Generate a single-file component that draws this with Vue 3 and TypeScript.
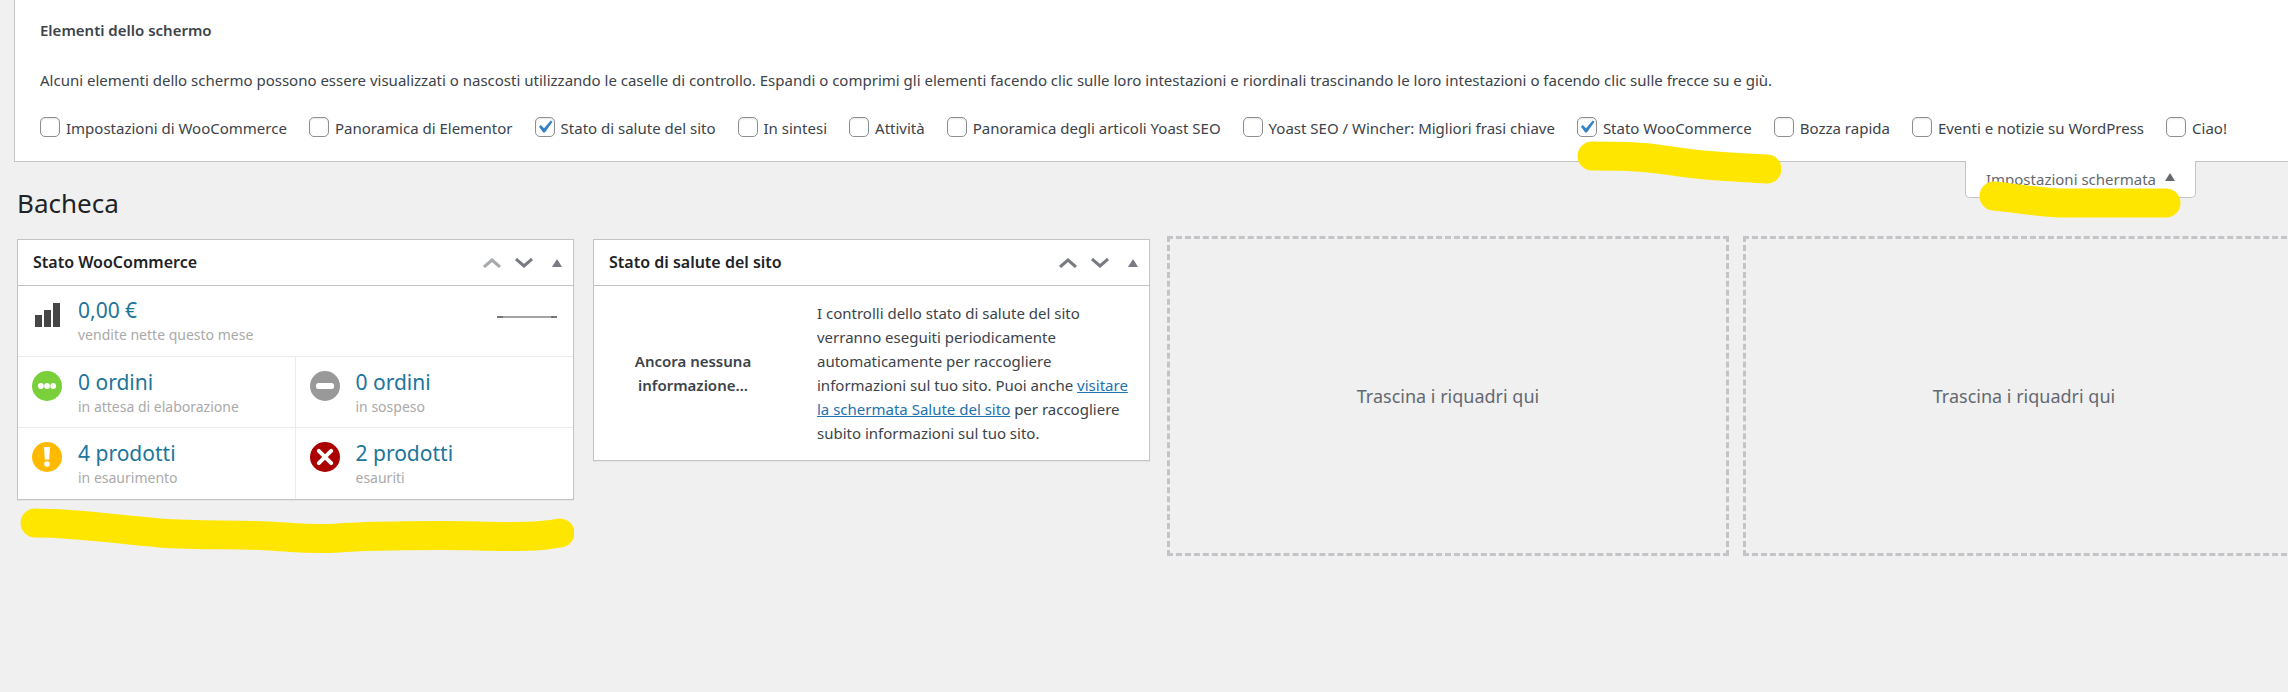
<script setup lang="ts">
import { reactive } from 'vue'

interface ScreenOption {
  id: string
  label: string
  checked: boolean
  marked?: boolean
}

interface StatusItem {
  icon: 'processing' | 'hold' | 'low' | 'out'
  value: string
  note: string
}

const options = reactive<ScreenOption[]>([
  { id: 'wc-setup', label: 'Impostazioni di WooCommerce', checked: false },
  { id: 'elementor', label: 'Panoramica di Elementor', checked: false },
  { id: 'site-health', label: 'Stato di salute del sito', checked: true },
  { id: 'right-now', label: 'In sintesi', checked: false },
  { id: 'activity', label: 'Attività', checked: false },
  { id: 'yoast', label: 'Panoramica degli articoli Yoast SEO', checked: false },
  { id: 'wincher', label: 'Yoast SEO / Wincher: Migliori frasi chiave', checked: false },
  { id: 'wc-status', label: 'Stato WooCommerce', checked: true, marked: true },
  { id: 'quick-press', label: 'Bozza rapida', checked: false },
  { id: 'primary', label: 'Eventi e notizie su WordPress', checked: false },
  { id: 'welcome', label: 'Ciao!', checked: false },
])

const statusItems: StatusItem[] = [
  { icon: 'processing', value: '0 ordini', note: 'in attesa di elaborazione' },
  { icon: 'hold', value: '0 ordini', note: 'in sospeso' },
  { icon: 'low', value: '4 prodotti', note: 'in esaurimento' },
  { icon: 'out', value: '2 prodotti', note: 'esauriti' },
]
</script>

<template>
  <div class="page">
    <section class="screen-meta">
      <h2 class="meta-title">Elementi dello schermo</h2>
      <p class="meta-text">
        Alcuni elementi dello schermo possono essere visualizzati o nascosti utilizzando le caselle di controllo.
        Espandi o comprimi gli elementi facendo clic sulle loro intestazioni e riordinali trascinando le loro
        intestazioni o facendo clic sulle frecce su e giù.
      </p>
      <div class="options">
        <label v-for="o in options" :key="o.id" class="option" :for="o.id">
          <span class="check">
            <input :id="o.id" v-model="o.checked" type="checkbox" />
            <svg v-if="o.checked" viewBox="2.7 2.2 15.4 15.4" aria-hidden="true">
              <path d="M14.83 4.89l1.34.94-5.81 8.38H9.02L5.78 9.67l1.34-1.25 2.57 2.4z" fill="#3582c4" />
            </svg>
          </span>
          {{ o.label }}
          <svg v-if="o.marked" class="marker marker-option" viewBox="0 0 204 44" aria-hidden="true">
            <path d="M15 15C40 15 62 15 88 19S130 25 190 28" />
          </svg>
        </label>
      </div>
    </section>

    <header class="top">
      <h1>Bacheca</h1>
      <div class="tab">
        <button type="button" class="tab-button">
          Impostazioni schermata
          <svg class="tab-arrow" viewBox="0 0 10 8" aria-hidden="true"><path d="M5 0l5 8H0z" fill="#646970" /></svg>
        </button>
        <svg class="marker marker-tab" viewBox="0 0 204 40" aria-hidden="true">
          <path d="M16 16C45 19 65 23 88 23S150 23 188 23" />
        </svg>
      </div>
    </header>

    <main class="columns">
      <section class="card">
        <div class="card-head">
          <h2>Stato WooCommerce</h2>
          <div class="handles">
            <button type="button" aria-label="Sposta su" disabled>
              <svg class="chev" viewBox="0 0 18 10"><path d="M1 9l8-7 8 7" /></svg>
            </button>
            <button type="button" aria-label="Sposta giù">
              <svg class="chev" viewBox="0 0 18 10"><path d="M1 1l8 7 8-7" /></svg>
            </button>
            <button type="button" aria-label="Comprimi" class="toggle">
              <svg class="tri" viewBox="0 0 10 8"><path d="M5 0l5 8H0z" /></svg>
            </button>
          </div>
        </div>
        <div class="sales">
          <svg class="icon" viewBox="0 0 30 30" aria-hidden="true">
            <path d="M3 16h7v12H3zM12 11h7v17h-7zM21 4h7v24h-7z" fill="#464646" />
          </svg>
          <a href="#sales" class="stat"><strong>0,00 €</strong><span>vendite nette questo mese</span></a>
          <svg class="spark" viewBox="0 0 60 2" aria-hidden="true">
            <path d="M0 0h60v2H0z" fill="#a5a5a5" />
            <path d="M0 0h6v2H0zM54 0h6v2h-6z" fill="#777" />
          </svg>
        </div>
        <div class="status-grid">
          <div v-for="s in statusItems" :key="s.icon" class="status">
            <svg class="icon" viewBox="0 0 30 30" aria-hidden="true">
              <template v-if="s.icon === 'processing'">
                <circle cx="15" cy="15" r="15" fill="#7ad03a" />
                <g fill="#fff">
                  <circle cx="8.800" cy="15" r="2.900" />
                  <circle cx="15" cy="15" r="2.900" />
                  <circle cx="21.200" cy="15" r="2.900" />
                </g>
              </template>
              <template v-else-if="s.icon === 'hold'">
                <circle cx="15" cy="15" r="15" fill="#999" />
                <rect x="6" y="12" width="18" height="6" rx="2.5" fill="#fff" />
              </template>
              <template v-else-if="s.icon === 'low'">
                <circle cx="15" cy="15" r="15" fill="#ffba00" />
                <path d="M12 5h6l-.8 12.5h-4.4z" fill="#fff" />
                <circle cx="15" cy="22" r="2.8" fill="#fff" />
              </template>
              <template v-else>
                <circle cx="15" cy="15" r="15" fill="#a00" />
                <path d="M8.800 8.800l12.400 12.400M21.200 8.800L8.800 21.200" stroke="#fff" stroke-width="4" stroke-linecap="round" />
              </template>
            </svg>
            <a :href="'#' + s.icon" class="stat"><strong>{{ s.value }}</strong><span>{{ s.note }}</span></a>
          </div>
        </div>
        <svg class="marker marker-card" viewBox="0 0 556 48" aria-hidden="true">
          <path d="M16 16C60 16 100 23 141 26S215 27 250 29S290 33 320 31S420 28 460 29S520 30 542 26" />
        </svg>
      </section>

      <section class="card">
        <div class="card-head">
          <h2>Stato di salute del sito</h2>
          <div class="handles">
            <button type="button" aria-label="Sposta su">
              <svg class="chev" viewBox="0 0 18 10"><path d="M1 9l8-7 8 7" /></svg>
            </button>
            <button type="button" aria-label="Sposta giù">
              <svg class="chev" viewBox="0 0 18 10"><path d="M1 1l8 7 8-7" /></svg>
            </button>
            <button type="button" aria-label="Comprimi" class="toggle">
              <svg class="tri" viewBox="0 0 10 8"><path d="M5 0l5 8H0z" /></svg>
            </button>
          </div>
        </div>
        <div class="health">
          <p class="health-label">Ancora nessuna informazione…</p>
          <p>
            I controlli dello stato di salute del sito verranno eseguiti periodicamente automaticamente per
            raccogliere informazioni sul tuo sito. Puoi anche
            <a href="#site-health">visitare la schermata Salute del sito</a> per raccogliere subito informazioni sul
            tuo sito.
          </p>
        </div>
      </section>

      <div class="drop">Trascina i riquadri qui</div>
      <div class="drop">Trascina i riquadri qui</div>
    </main>
  </div>
</template>

<style>
body {
  margin: 0;
  background: #f0f0f0;
}
</style>

<style scoped>
.page {
  min-height: 100vh;
  overflow: hidden;
  background: #f0f0f0;
  color: #3c434a;
  font-family: 'Noto Sans', 'Open Sans', sans-serif;
  font-size: 15px;
  line-height: 24px;
}
h1,
h2,
p {
  margin: 0;
}
button {
  margin: 0;
  padding: 0;
  border: 0;
  background: none;
  font: inherit;
  color: inherit;
}
svg {
  display: block;
}

.screen-meta {
  margin-left: 14px;
  padding: 18px 25px 21px;
  border: 1px solid #c3c4c7;
  border-width: 0 0 1px 1px;
  background: #fff;
}
.meta-title {
  font-size: 15px;
  font-weight: 600;
}
.meta-text {
  margin: 26px 0 24px;
}
.options {
  display: flex;
  flex-wrap: wrap;
  gap: 0 22px;
}
.option {
  position: relative;
  display: flex;
  align-items: center;
  gap: 6px;
}
.check {
  position: relative;
  width: 20px;
  height: 20px;
  margin-bottom: 2px;
}
.check input {
  appearance: none;
  display: block;
  box-sizing: border-box;
  width: 20px;
  height: 20px;
  margin: 0;
  border: 1px solid #8c8f94;
  border-radius: 5px;
  background: #fff;
  box-shadow: inset 0 1px 2px rgba(0, 0, 0, 0.1);
}
.check svg {
  position: absolute;
  inset: 0;
  pointer-events: none;
}

.marker {
  position: absolute;
  z-index: 2;
  pointer-events: none;
}
.marker path {
  fill: none;
  stroke: #ffe600;
  stroke-width: 29;
  stroke-linecap: round;
  stroke-linejoin: round;
}
.marker-option {
  top: 25px;
  left: 0;
  width: 204px;
  height: 44px;
}
.marker-tab {
  top: 19px;
  left: 12px;
  width: 204px;
  height: 40px;
}
.marker-card {
  top: 100%;
  left: 1px;
  width: 100%;
  margin-top: 8px;
}

.top {
  display: flex;
  align-items: flex-start;
  justify-content: space-between;
  margin-top: -1px;
  padding: 0 92px 0 17px;
}
h1 {
  padding: 25px 0 16px;
  color: #1d2327;
  font-size: 26px;
  font-weight: 400;
  line-height: 34px;
}
.tab {
  position: relative;
  border: 1px solid #c3c4c7;
  border-top: 0;
  border-radius: 0 0 5px 5px;
  background: #fff;
}
.tab-button {
  display: flex;
  align-items: center;
  gap: 9px;
  padding: 6px 20px;
  color: #646970;
}
.tab-arrow {
  width: 10px;
  height: 8px;
  margin-bottom: 4px;
}

.columns {
  display: grid;
  grid-template-columns: repeat(4, 1fr);
  align-items: start;
  margin: 0 -24px 0 8px;
}
.card {
  position: relative;
  margin: 3px 10px 0 9px;
  border: 1px solid #c3c4c7;
  background: #fff;
  box-shadow: 0 1px 1px rgba(0, 0, 0, 0.04);
}
.card-head {
  display: flex;
  align-items: center;
  justify-content: space-between;
  padding: 0 11px 0 15px;
  border-bottom: 1px solid #c3c4c7;
}
.card-head h2 {
  color: #1d2327;
  font-size: 16px;
  font-weight: 600;
  line-height: 45px;
}
.handles {
  display: flex;
  align-items: center;
  gap: 14px;
  color: #787c82;
}
.handles button:disabled {
  color: #a7aaad;
}
.chev {
  width: 18px;
  height: 10px;
  fill: none;
  stroke: currentColor;
  stroke-width: 3;
}
.toggle {
  padding-left: 5px;
}
.tri {
  width: 10px;
  height: 8px;
  fill: currentColor;
}

.sales,
.status {
  display: flex;
  align-items: flex-start;
  gap: 16px;
  padding: 10px 14px;
}
.sales {
  border-bottom: 1px solid #ececec;
}
.icon {
  flex: none;
  width: 30px;
  height: 30px;
  margin-top: 3px;
}
.stat {
  color: #aaa;
  font-size: 14px;
  line-height: 22px;
  text-decoration: none;
}
.stat strong {
  display: block;
  color: #21759b;
  font-size: 21px;
  font-weight: 400;
  line-height: 28px;
}
.stat span {
  display: block;
}
.spark {
  width: 60px;
  height: 2px;
  margin: 20px 2px 0 auto;
}
.status-grid {
  display: grid;
  grid-template-columns: 1fr 1fr;
}
.status {
  padding-top: 11px;
}
.status:nth-child(odd) {
  border-right: 1px solid #ececec;
}
.status:nth-child(-n + 2) {
  padding-bottom: 9px;
  border-bottom: 1px solid #ececec;
}

.health {
  display: grid;
  grid-template-columns: 32% 1fr;
  align-items: center;
  gap: 40px;
  padding: 15px;
}
.health-label {
  padding: 0 24px;
  font-weight: 600;
  text-align: center;
}
.health a {
  color: #2271b1;
}
.drop {
  display: flex;
  align-items: center;
  justify-content: center;
  box-sizing: border-box;
  min-height: 320px;
  margin: 0 7px;
  border: 3px dashed #c3c4c7;
  color: #646970;
  font-size: 18px;
}
</style>
